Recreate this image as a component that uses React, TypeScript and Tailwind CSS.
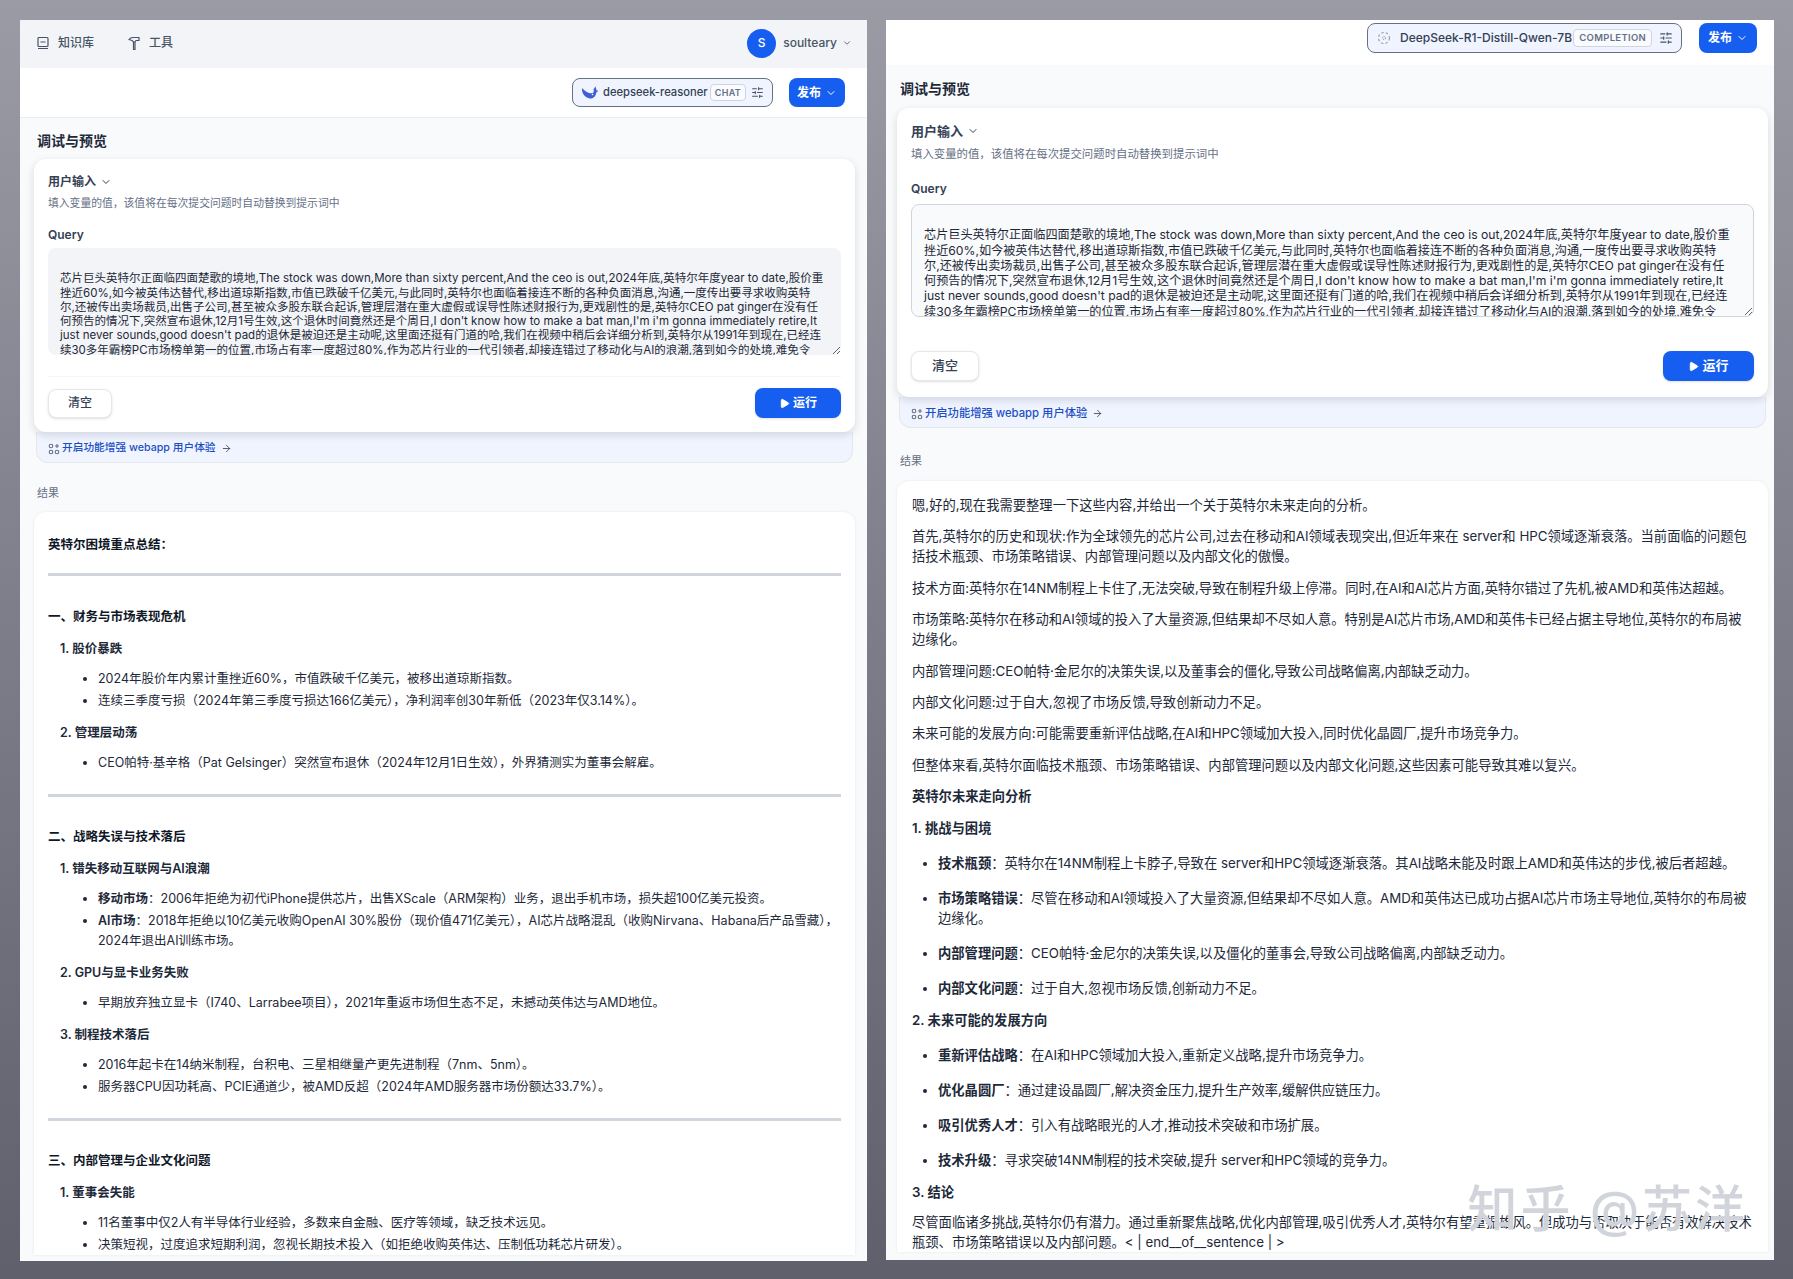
import { ArrowRight, ChevronDown, Play, SlidersHorizontal } from "lucide-react";
import type { ReactNode } from "react";

const queryText = [
  "",
  "芯片巨头英特尔正面临四面楚歌的境地,The stock was down,More than sixty percent,And the ceo is out,2024年底,英特尔年度year to date,股价重",
  "挫近60%,如今被英伟达替代,移出道琼斯指数,市值已跌破千亿美元,与此同时,英特尔也面临着接连不断的各种负面消息,沟通,一度传出要寻求收购英特",
  "尔,还被传出卖场裁员,出售子公司,甚至被众多股东联合起诉,管理层潜在重大虚假或误导性陈述财报行为,更戏剧性的是,英特尔CEO pat ginger在没有任",
  "何预告的情况下,突然宣布退休,12月1号生效,这个退休时间竟然还是个周日,I don't know how to make a bat man,I'm i'm gonna immediately retire,It",
  "just never sounds,good doesn't pad的退休是被迫还是主动呢,这里面还挺有门道的哈,我们在视频中稍后会详细分析到,英特尔从1991年到现在,已经连",
  "续30多年霸榜PC市场榜单第一的位置,市场占有率一度超过80%,作为芯片行业的一代引领者,却接连错过了移动化与AI的浪潮,落到如今的处境,难免令",
].join("\n");

function KnowledgeIcon() {
  return (
    <svg width="14" height="14" viewBox="0 0 14 14" fill="none" stroke="#475467" strokeWidth="1.2">
      <rect x="2" y="1.5" width="10" height="9" rx="1" />
      <path d="M4.5 6h5M2 12.5h10" />
    </svg>
  );
}

function ToolIcon() {
  return (
    <svg width="14" height="15" viewBox="0 0 14 15" fill="none" stroke="#475467" strokeWidth="1.2">
      <path d="M2 3.500c1-1.500 2.500-2 4-2h6v3H9L8 6H6.500L5 4.500C4 4 3 4 2 3.500zM6.500 6v7.500H8V6" />
    </svg>
  );
}

function WhaleIcon() {
  return (
    <svg width="18" height="15" viewBox="0 0 18 15">
      <path
        d="M1 3c-.5 5 3 10 8 10.500 3.500.3 6-2.500 6.300-6 .8-.3 1.500-.9 2-1.900-.6.2-1.300.2-1.800 0-.1-1.800-.6-3.200-1.300-4.300-.3 1.300-.9 2.300-1.700 3 .9 2.400-.2 4-2 4C7 8.300 3.500 6 1 3z"
        fill="#3f5fd8"
      />
      <circle cx="11.500" cy="9.500" r=".8" fill="#ffffff" />
    </svg>
  );
}

function DashedCircleIcon() {
  return (
    <svg width="14" height="14" viewBox="0 0 14 14" fill="none" stroke="#98a2b3" strokeWidth="1.2">
      <circle cx="7" cy="7" r="5.500" strokeDasharray="2.500 2" />
      <circle cx="7" cy="7" r="1.500" strokeDasharray="1 1" />
    </svg>
  );
}

function FeatureIcon() {
  return (
    <svg width="12" height="12" viewBox="0 0 12 12" fill="none" stroke="#667085" strokeWidth="1.1">
      <circle cx="3" cy="3" r="1.800" />
      <path d="M9 1v4M7 3h4" />
      <circle cx="3" cy="9" r="1.800" />
      <circle cx="9" cy="9" r="1.800" />
    </svg>
  );
}

function PublishButton({ cls }: { cls: string }) {
  return (
    <button className={`flex items-center justify-center gap-1 rounded-lg bg-[#155eef] text-[12px] font-semibold whitespace-nowrap text-white ${cls}`}>
      发布
      <ChevronDown size={12} strokeWidth={2} />
    </button>
  );
}

function InputCard({ large }: { large: boolean }) {
  return (
    <div className="relative z-10 rounded-xl bg-white px-[14px] shadow-[0_3px_8px_rgba(16,24,40,0.14)]">
      <div className={large ? "flex items-center gap-1 pt-[13px] text-[13px] leading-5 font-semibold text-[#344054]" : "flex items-center gap-1 pt-[13px] text-[12px] leading-5 font-semibold text-[#344054]"}>
        用户输入
        <ChevronDown size={12} />
      </div>
      <p className={large ? "mt-[5px] text-[11.4px] leading-4 text-[#667085]" : "mt-1 text-[10.8px] leading-4 text-[#667085]"}>填入变量的值，该值将在每次提交问题时自动替换到提示词中</p>
      <p className={large ? "mt-[17px] text-[12px] leading-5 font-semibold text-[#344054]" : "mt-[13px] text-[12px] leading-5 font-semibold text-[#344054]"}>Query</p>
      <textarea
        readOnly
        value={queryText}
        wrap="off"
        className={
          large
            ? "mt-[5px] block h-[113px] w-full resize-y overflow-hidden rounded-lg border border-[#d0d5dd] bg-[#f9fafb] px-3 pt-[7px] text-[12.15px] leading-[15.3px] whitespace-pre text-[#1d2939] outline-none"
            : "mt-[3px] block h-[107px] w-full resize-y overflow-hidden rounded-lg bg-[#f2f4f7] px-3 pt-[9px] text-[11.5px] leading-[14.3px] whitespace-pre text-[#1d2939] outline-none"
        }
      />
      <div className={large ? "mt-[34px]" : "mt-[21px] mb-[11px] border-t border-[#f2f4f7]"} />
      <div className={large ? "flex items-center justify-between pb-4" : "flex items-center justify-between pb-[14px]"}>
        <button className={large ? "h-[30px] w-[68px] rounded-lg border border-[#e4e7ec] bg-white text-[13px] font-medium text-[#344054] shadow-sm" : "h-[29px] w-[64px] rounded-lg border border-[#e4e7ec] bg-white text-[12px] font-medium text-[#344054] shadow-sm"}>清空</button>
        <button className={large ? "flex h-[30px] w-[91px] items-center justify-center gap-[3px] rounded-lg bg-[#155eef] text-[13px] font-semibold text-white shadow-sm" : "flex h-[30px] w-[86px] items-center justify-center gap-[3px] rounded-lg bg-[#155eef] text-[12px] font-semibold text-white shadow-sm"}>
          <Play size={11} fill="white" />
          运行
        </button>
      </div>
    </div>
  );
}

function Banner({ large }: { large: boolean }) {
  return (
    <div className={`mx-[2px] flex h-[31px] items-center gap-[2px] rounded-b-xl border border-t-0 border-[#e4e7ec] bg-[#eff4ff] px-[11px] pt-[3px] font-medium text-[#1d4fc4] ${large ? "text-[11.3px]" : "text-[10.7px]"}`}>
      <FeatureIcon />
      开启功能增强 webapp 用户体验
      <ArrowRight size={11} className="ml-[3px]" color="#475467" />
    </div>
  );
}

function Section({ children }: { children: string }) {
  return <h3 className="text-[12.5px] leading-5 font-semibold text-[#101828]">{children}</h3>;
}

function SubTitle({ children }: { children: string }) {
  return <h4 className="mt-3 mb-[10px] ml-3 text-[12.5px] leading-5 font-semibold text-[#1d2939]">{children}</h4>;
}

function Dots({ items }: { items: ReactNode[] }) {
  return (
    <ul className="ml-[50px] list-disc space-y-[2px] text-[12.5px] leading-5 text-[#1d2939]">
      {items.map((it, i) => (
        <li key={i}>{it}</li>
      ))}
    </ul>
  );
}

function Rule({ cls }: { cls: string }) {
  return <hr className={`h-[3px] border-0 bg-[#d0d5dd] ${cls}`} />;
}

function LeftResult() {
  return (
    <div className="mt-2 rounded-t-xl bg-white px-[14px] pt-[23px] shadow-[0_0_3px_rgba(16,24,40,0.08)]">
      <Section>英特尔困境重点总结：</Section>
      <Rule cls="mt-[18px] mb-[31px]" />
      <Section>一、财务与市场表现危机</Section>
      <SubTitle>1. 股价暴跌</SubTitle>
      <Dots
        items={[
          "2024年股价年内累计重挫近60%，市值跌破千亿美元，被移出道琼斯指数。",
          "连续三季度亏损（2024年第三季度亏损达166亿美元），净利润率创30年新低（2023年仅3.14%）。",
        ]}
      />
      <SubTitle>2. 管理层动荡</SubTitle>
      <Dots items={["CEO帕特·基辛格（Pat Gelsinger）突然宣布退休（2024年12月1日生效），外界猜测实为董事会解雇。"]} />
      <Rule cls="mt-[21px] mb-[30px]" />
      <Section>二、战略失误与技术落后</Section>
      <SubTitle>1. 错失移动互联网与AI浪潮</SubTitle>
      <Dots
        items={[
          <>
            <b className="font-semibold">移动市场</b>：2006年拒绝为初代iPhone提供芯片，出售XScale（ARM架构）业务，退出手机市场，损失超100亿美元投资。
          </>,
          <>
            <b className="font-semibold">AI市场</b>：2018年拒绝以10亿美元收购OpenAI 30%股份（现价值471亿美元），AI芯片战略混乱（收购Nirvana、Habana后产品雪藏），
            <br />
            2024年退出AI训练市场。
          </>,
        ]}
      />
      <SubTitle>2. GPU与显卡业务失败</SubTitle>
      <Dots items={["早期放弃独立显卡（I740、Larrabee项目），2021年重返市场但生态不足，未撼动英伟达与AMD地位。"]} />
      <SubTitle>3. 制程技术落后</SubTitle>
      <Dots
        items={[
          "2016年起卡在14纳米制程，台积电、三星相继量产更先进制程（7nm、5nm）。",
          "服务器CPU因功耗高、PCIE通道少，被AMD反超（2024年AMD服务器市场份额达33.7%）。",
        ]}
      />
      <Rule cls="mt-[21px] mb-[30px]" />
      <Section>三、内部管理与企业文化问题</Section>
      <SubTitle>1. 董事会失能</SubTitle>
      <Dots
        items={[
          "11名董事中仅2人有半导体行业经验，多数来自金融、医疗等领域，缺乏技术远见。",
          "决策短视，过度追求短期利润，忽视长期技术投入（如拒绝收购英伟达、压制低功耗芯片研发）。",
        ]}
      />
    </div>
  );
}

const rightParagraphs = [
  "嗯,好的,现在我需要整理一下这些内容,并给出一个关于英特尔未来走向的分析。",
  "首先,英特尔的历史和现状:作为全球领先的芯片公司,过去在移动和AI领域表现突出,但近年来在 server和 HPC领域逐渐衰落。当前面临的问题包括技术瓶颈、市场策略错误、内部管理问题以及内部文化的傲慢。",
  "技术方面:英特尔在14NM制程上卡住了,无法突破,导致在制程升级上停滞。同时,在AI和AI芯片方面,英特尔错过了先机,被AMD和英伟达超越。",
  "市场策略:英特尔在移动和AI领域的投入了大量资源,但结果却不尽如人意。特别是AI芯片市场,AMD和英伟卡已经占据主导地位,英特尔的布局被边缘化。",
  "内部管理问题:CEO帕特·金尼尔的决策失误,以及董事会的僵化,导致公司战略偏离,内部缺乏动力。",
  "内部文化问题:过于自大,忽视了市场反馈,导致创新动力不足。",
  "未来可能的发展方向:可能需要重新评估战略,在AI和HPC领域加大投入,同时优化晶圆厂,提升市场竞争力。",
  "但整体来看,英特尔面临技术瓶颈、市场策略错误、内部管理问题以及内部文化问题,这些因素可能导致其难以复兴。",
];

function KeyList({ items }: { items: [string, string][] }) {
  return (
    <ul className="mt-[15px] ml-[26px] list-disc space-y-[15px]">
      {items.map(([k, v]) => (
        <li key={k}>
          <b className="font-semibold">{k}</b>：{v}
        </li>
      ))}
    </ul>
  );
}

function RightResult() {
  return (
    <div className="mt-[10px] rounded-t-xl bg-white px-[15px] pt-[14px] text-[13.3px] leading-5 text-[#1d2939] shadow-[0_0_3px_rgba(16,24,40,0.08)]">
      <div className="space-y-[11.4px]">
        {rightParagraphs.map((p) => (
          <p key={p}>{p}</p>
        ))}
        <p className="font-semibold">英特尔未来走向分析</p>
        <p className="font-semibold">1. 挑战与困境</p>
      </div>
      <KeyList
        items={[
          ["技术瓶颈", "英特尔在14NM制程上卡脖子,导致在 server和HPC领域逐渐衰落。其AI战略未能及时跟上AMD和英伟达的步伐,被后者超越。"],
          ["市场策略错误", "尽管在移动和AI领域投入了大量资源,但结果却不尽如人意。AMD和英伟达已成功占据AI芯片市场主导地位,英特尔的布局被边缘化。"],
          ["内部管理问题", "CEO帕特·金尼尔的决策失误,以及僵化的董事会,导致公司战略偏离,内部缺乏动力。"],
          ["内部文化问题", "过于自大,忽视市场反馈,创新动力不足。"],
        ]}
      />
      <p className="mt-[12px] font-semibold">2. 未来可能的发展方向</p>
      <KeyList
        items={[
          ["重新评估战略", "在AI和HPC领域加大投入,重新定义战略,提升市场竞争力。"],
          ["优化晶圆厂", "通过建设晶圆厂,解决资金压力,提升生产效率,缓解供应链压力。"],
          ["吸引优秀人才", "引入有战略眼光的人才,推动技术突破和市场扩展。"],
          ["技术升级", "寻求突破14NM制程的技术突破,提升 server和HPC领域的竞争力。"],
        ]}
      />
      <p className="mt-[12px] font-semibold">3. 结论</p>
      <p className="mt-[10px]">尽管面临诸多挑战,英特尔仍有潜力。通过重新聚焦战略,优化内部管理,吸引优秀人才,英特尔有望重振雄风。但成功与否取决于能否有效解决技术瓶颈、市场策略错误以及内部问题。&lt; | end__of__sentence | &gt;</p>
    </div>
  );
}

export default function App() {
  return (
    <div className="flex h-[1279px] gap-[19px] overflow-hidden bg-gradient-to-b from-[#9b9ba6] to-[#5f606c] pt-5 pl-5 font-['Inter','Noto_Sans_CJK_SC',sans-serif]">
      <div className="h-[1241px] w-[847px] shrink-0 overflow-hidden bg-[#f9fafb]">
        <div className="flex h-12 items-center justify-between bg-[#f2f4f7] pr-[15px] pb-[2px] pl-4 text-[12px] text-[#475467]">
          <div className="flex items-center">
            <KnowledgeIcon />
            <span className="ml-2 font-medium">知识库</span>
            <span className="ml-[33px]">
              <ToolIcon />
            </span>
            <span className="ml-2 font-medium">工具</span>
          </div>
          <div className="flex items-center">
            <span className="flex h-[29px] w-[29px] items-center justify-center rounded-full bg-[#155eef] text-[12px] font-medium text-white">S</span>
            <span className="ml-[7px] text-[12px] font-medium">soulteary</span>
            <ChevronDown size={10} className="ml-[5px]" />
          </div>
        </div>
        <div className="flex h-[50px] items-center justify-end gap-4 border-b border-[#eaecf0] bg-white pr-[22px]">
          <div className="flex h-[29px] w-[201px] items-center justify-between rounded-lg border border-[#667085] bg-[#eff4ff] pr-2 pl-2">
            <div className="flex items-center gap-[4px]">
              <WhaleIcon />
              <span className="text-[11.2px] font-medium whitespace-nowrap text-[#344054]">deepseek-reasoner</span>
            </div>
            <div className="flex items-center gap-[5px]">
              <span className="rounded border border-[#d0d5dd] bg-white/60 px-1 py-[1px] text-[9px] leading-[13px] font-semibold tracking-[0.3px] text-[#667085]">CHAT</span>
              <SlidersHorizontal size={13} color="#475467" />
            </div>
          </div>
          <PublishButton cls="h-[29px] w-[56px]" />
        </div>
        <div className="pr-3 pl-[14px]">
          <div className="px-[3px] pt-[13px] pb-2 text-[14px] leading-5 font-semibold text-[#1d2939]">调试与预览</div>
          <InputCard large={false} />
          <Banner large={false} />
          <div className="px-[3px] pt-5 pb-[1px] text-[11px] leading-5 text-[#667085]">结果</div>
          <LeftResult />
        </div>
      </div>

      <div className="relative h-[1240px] w-[888px] shrink-0 overflow-hidden bg-[#f9fafb]">
        <div className="flex h-[45px] items-start justify-end gap-[17px] bg-white pt-[3px] pr-[17px]">
          <div className="flex h-[30px] w-[315px] items-center justify-between rounded-lg border border-[#667085] bg-[#eff4ff] pr-2 pl-[9px]">
            <div className="flex items-center gap-[9px]">
              <DashedCircleIcon />
              <span className="text-[12px] font-medium whitespace-nowrap text-[#344054]">DeepSeek-R1-Distill-Qwen-7B</span>
            </div>
            <div className="flex items-center gap-[7px]">
              <span className="rounded border border-[#d0d5dd] bg-white/60 px-[5px] py-[1px] text-[9.5px] leading-[14px] font-semibold tracking-[0.3px] text-[#667085]">COMPLETION</span>
              <SlidersHorizontal size={14} color="#475467" />
            </div>
          </div>
          <PublishButton cls="h-[30px] w-[58px]" />
        </div>
        <div className="pr-[6px] pl-[11px]">
          <div className="px-[3px] pt-[14px] pb-[9px] text-[14px] leading-5 font-semibold text-[#1d2939]">调试与预览</div>
          <InputCard large />
          <Banner large />
          <div className="px-[3px] pt-[23px] text-[11px] leading-5 text-[#667085]">结果</div>
          <RightResult />
        </div>
        <div className="absolute right-[26px] bottom-[26px] text-[50px] leading-none font-medium tracking-[3px] whitespace-nowrap text-[#c9ccd3]/85 [text-shadow:0_0_1px_rgba(255,255,255,0.9)]">知乎 @苏洋</div>
      </div>
    </div>
  );
}
